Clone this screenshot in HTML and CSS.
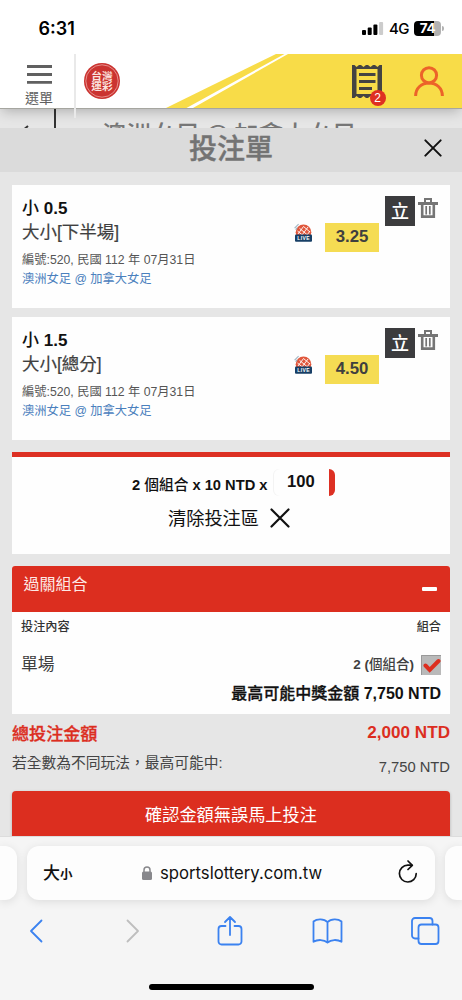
FILE: index.html
```html
<!DOCTYPE html>
<html lang="zh-Hant">
<head>
<meta charset="utf-8">
<title>投注單</title>
<link rel="stylesheet" href="styles.css">
</head>
<body>
<svg class="defs" width="0" height="0" aria-hidden="true">
  <defs>
    <symbol id="live" viewBox="0 0 18 20">
      <circle cx="9.5" cy="9.3" r="7.8" fill="#e0573c"/>
      <path d="M3.500 8 9 12.500M5.500 5.300 13.500 12M9.500 3.500 16 9M4 11l5.500-7.500M8 12l6-8M13 12l3-4" stroke="#fff" stroke-width=".9" fill="none"/>
      <path d="M.6 5.2 4.600 1.200M1.600 6.600l1.600-1.800" stroke="#9fb6c4" stroke-width="1.100" fill="none"/>
      <rect x="1" y="11.600" width="17" height="7.200" rx="1" fill="#173f66"/>
      <text x="9.700" y="17" text-anchor="middle" class="live-text">LIVE</text>
    </symbol>
    <symbol id="trash" viewBox="0 0 20 20">
      <path d="M0 4h20v3H0zM6 0h8v4h-2V2H8v2H6z" fill="#757575"/>
      <path d="M4.200 6v12.600h11.600V6" fill="none" stroke="#757575" stroke-width="2.600"/>
      <path d="M8.200 8v8.500M11.800 8v8.500" stroke="#757575" stroke-width="1.700"/>
    </symbol>
    <symbol id="cross" viewBox="0 0 20 20">
      <path d="M1.500 1.500l17 17M18.500 1.500l-17 17" fill="none" stroke="#111" stroke-width="2.200" stroke-linecap="round"/>
    </symbol>
  </defs>
</svg>
<div class="screen">
  <div class="status">
    <span class="clock">6:31</span>
    <svg class="signal" width="22" height="14" viewBox="0 0 22 14"><rect x="0" y="9" width="4" height="5" rx="1"/><rect x="5.700" y="6.500" width="4" height="7.500" rx="1"/><rect x="11.400" y="3.500" width="4" height="10.500" rx="1"/><rect x="17.100" y="1" width="4" height="13" rx="1" fill="#ccc"/></svg>
    <span class="net">4G</span>
    <span class="battery"><span class="level">74</span></span><i class="nub"></i>
  </div>

  <header class="site">
    <div class="menu">
      <svg width="25" height="19" viewBox="0 0 25 19"><path d="M0 1.500h25M0 9.500h25M0 17.300h25" stroke="#606060" stroke-width="2.800"/></svg>
      <span>選單</span>
    </div>
    <i class="divider"></i>
    <svg class="logo" width="38" height="38" viewBox="0 0 38 38">
      <circle cx="19" cy="19" r="18" fill="#cb3330"/>
      <circle cx="19" cy="19" r="16.200" fill="none" stroke="#f0b5b0" stroke-width=".7"/>
      <text x="8.300" y="18" textLength="21.500" lengthAdjust="spacingAndGlyphs" class="logo-text">台灣</text>
      <text x="8.300" y="28.200" textLength="21.500" lengthAdjust="spacingAndGlyphs" class="logo-text">運彩</text>
    </svg>
    <svg class="road" width="296" height="54" viewBox="0 0 296 54">
      <path d="M0 54 110 0H296V54z" fill="#f8dc48"/>
      <path d="M20.500 54 118.500 0h3.500L27 54z" fill="#fff"/>
    </svg>
    <div class="slip">
      <svg width="30" height="34" viewBox="0 0 30 34">
        <path d="M0 0h2.500l2 2 2.500-2h2l2.500 2L14 0h2l2.500 2L21 0h2l2.500 2 2-2H30v33h-2.500l-2-2-2.500 2h-2l-2.500-2-2.500 2h-2l-2.500-2L9 33H7l-2.500-2-2 2H0z" fill="#444342"/>
        <path d="M4.500 4h21v25h-21z" fill="#f8dc48"/>
        <path d="M7 9.500h16.500M7 16.500h16.500M7 23.500h13" stroke="#444342" stroke-width="3"/>
      </svg>
      <b class="count">2</b>
    </div>
    <svg class="user" width="30" height="30" viewBox="0 0 30 30" fill="none" stroke="#ec6329" stroke-width="3"><circle cx="15" cy="9.300" r="7.600"/><path d="M1.600 30c0-8 6-13 13.400-13s13.400 5 13.400 13"/></svg>
  </header>

  <div class="behind"><span class="crumb"><svg width="10" height="10" viewBox="0 0 10 10"><path d="M8 1 2 6l6 4" fill="none" stroke="#333" stroke-width="2"/></svg></span><span class="match">澳洲女足 @ 加拿大女足</span></div>

  <div class="title"><h1>投注單</h1><svg width="18" height="18"><use href="#cross"/></svg></div>

  <main>
    <section class="bet">
      <div class="info">
        <div class="pick"><span class="zh">小</span> 0.5</div>
        <div class="kind">大小[下半場]</div>
        <div class="code">編號:520, 民國 112 年 07月31日</div>
        <div class="teams">澳洲女足 @ 加拿大女足</div>
      </div>
      <svg class="live" width="18" height="20"><use href="#live"/></svg>
      <span class="odds">3.25</span>
      <span class="stand">立</span>
      <svg class="trash" width="20" height="20"><use href="#trash"/></svg>
    </section>

    <section class="bet">
      <div class="info">
        <div class="pick"><span class="zh">小</span> 1.5</div>
        <div class="kind">大小[總分]</div>
        <div class="code">編號:520, 民國 112 年 07月31日</div>
        <div class="teams">澳洲女足 @ 加拿大女足</div>
      </div>
      <svg class="live" width="18" height="20"><use href="#live"/></svg>
      <span class="odds">4.50</span>
      <span class="stand">立</span>
      <svg class="trash" width="20" height="20"><use href="#trash"/></svg>
    </section>

    <section class="stake">
      <div class="formula"><span>2 <span class="zh">個組合</span> x 10 NTD x</span><span class="amount">100</span></div>
      <div class="clear"><span>清除投注區</span><svg width="20" height="20"><use href="#cross"/></svg></div>
    </section>

    <section class="combo">
      <div class="combo-head"><span>過關組合</span><i></i></div>
      <div class="cols"><span>投注內容</span><span>組合</span></div>
      <div class="single">
        <span class="name">單場</span>
        <span class="num">2 (<span class="zh">個組合</span>)</span>
        <svg width="20" height="20" viewBox="0 0 20 20"><rect width="20" height="20" fill="#b9b9b9"/><path d="M.5 20V.5H20" fill="none" stroke="#999"/><path d="M4.500 10.500 8.700 14.800 17.500 6" fill="none" stroke="#dd2e1f" stroke-width="4" stroke-linecap="round"/></svg>
      </div>
      <div class="prize"><span class="zh">最高可能中獎金額</span> 7,750 NTD</div>
    </section>

    <div class="total"><span class="zh">總投注金額</span><b>2,000 NTD</b></div>
    <div class="possible"><span>若全數為不同玩法，最高可能中:</span><span class="sum">7,750 NTD</span></div>
    <div class="confirm">確認金額無誤馬上投注</div>
  </main>

  <footer>
    <div class="tabs">
      <i class="side left"></i>
      <div class="address">
        <span class="size">大<small>小</small></span>
        <svg class="lock" width="10" height="14" viewBox="0 0 10 14"><rect x="0" y="5.500" width="10" height="8.500" rx="1.500" fill="#88888c"/><path d="M2 6V4a3 3 0 0 1 6 0v2" fill="none" stroke="#88888c" stroke-width="1.500"/></svg>
        <span class="url">sportslottery.com.tw</span>
        <svg class="reload" width="20" height="23" viewBox="0 0 20 23" fill="none" stroke="#111" stroke-width="1.700" stroke-linecap="round" stroke-linejoin="round"><path d="M18.200 13.700A8.400 8.400 0 1 1 9.800 5.200h4"/><path d="M10 1l4.300 4.300L10 9.500"/></svg>
      </div>
      <i class="side right"></i>
    </div>
    <nav>
      <svg width="16" height="26" viewBox="0 0 16 26"><path d="M13.500 2.500 3 13l10.500 10.500" class="line"/></svg>
      <svg width="16" height="26" viewBox="0 0 16 26"><path d="M2.500 2.500 13 13 2.500 23.500" class="line off"/></svg>
      <svg width="26" height="32" viewBox="0 0 26 32"><path d="M8.500 11H4.500A3 3 0 0 0 1.500 14v12.500a3 3 0 0 0 3 3h17a3 3 0 0 0 3-3V14a3 3 0 0 0-3-3h-4M13 20V2.500M8 7l5-5 5 5" class="line"/></svg>
      <svg width="31" height="26" viewBox="0 0 31 26"><path d="M15.500 4.200C12 .5 5 .5 1.500 3.500v20.300c4-2.500 10.500-2.500 14 .8 3.500-3.300 10-3.300 14-.8V3.500C26 .5 19 .5 15.500 4.200zM15.500 4.200v20" class="line"/></svg>
      <svg width="30" height="30" viewBox="0 0 30 30"><path d="M8.500 22.500H5a3 3 0 0 1-3-3V5a3 3 0 0 1 3-3h14.500a3 3 0 0 1 3 3v3.500" class="line"/><rect x="8.500" y="8.500" width="20" height="19.500" rx="3" class="line"/></svg>
    </nav>
    <i class="home"></i>
  </footer>
</div>
</body>
</html>
```
FILE: styles.css
```css
* { box-sizing: border-box; }
html, body { margin: 0; padding: 0; }
body { font-family: "Liberation Sans", "Noto Sans CJK TC", sans-serif; color: #3f3f3f; background: #e6e6e6; }
svg { display: block; flex: none; }
i { display: block; flex: none; }
.defs { position: absolute; }
.screen { width: 462px; height: 1000px; overflow: hidden; display: flex; flex-direction: column; background: #e6e6e6; }
.zh { font-family: "Noto Sans CJK TC", sans-serif; font-weight: 500; line-height: 1; }

.status { height: 54px; flex: none; background: #fff; display: flex; align-items: flex-start; padding: 0 18px 0 38.500px; color: #000; font-family: Inter, sans-serif; }
.clock { width: 323.500px; font-size: 18px; font-weight: 600; line-height: 22px; padding-top: 18px; letter-spacing: 0; }
.signal { margin-top: 21px; }
.net { width: 30px; padding-left: 5px; margin-top: 20px; font-size: 15px; font-weight: 500; line-height: 18px; letter-spacing: -.6px; }
.battery { width: 27px; height: 15px; margin-top: 21px; border-radius: 4px; background: linear-gradient(90deg, #000 74%, #b2b2b2 74%); }
.level { display: block; text-align: center; color: #fff; font-size: 13.500px; font-weight: 700; line-height: 15px; letter-spacing: -.4px; }
.nub { width: 1.500px; height: 5px; margin: 26px 0 0 1px; background: #b2b2b2; border-radius: 0 2px 2px 0; }

.site { height: 55px; flex: none; display: grid; grid-template-columns: 74px 2px 1fr; background: #fff; border-bottom: 1.500px solid #a6a6a0; box-shadow: 0 4px 12px -2px rgba(0,0,0,.25); clip-path: inset(0 0 -20px 0); position: relative; z-index: 2; }
.menu { padding: 11px 0 0 25px; color: #606060; font-size: 14px; line-height: 20px; }
.menu svg { margin: 0 0 4px 2px; }
.menu span { display: block; }
.divider { height: 64px; background: #e9e9e9; z-index: 2; }
.logo { margin: 8px 0 0 7px; }
.logo-text { font: 700 9.800px "Noto Sans CJK TC", sans-serif; fill: #fbe3df; }
.road { position: absolute; right: 0; top: 0; }
.slip { position: absolute; left: 352px; top: 11px; }
.count { position: absolute; left: 17.500px; top: 25px; width: 16px; height: 16px; border-radius: 50%; background: #df3022; color: #fff; font-size: 12px; font-weight: 400; line-height: 16px; text-align: center; }
.user { position: absolute; left: 414px; top: 12px; }

.behind { height: 19px; flex: none; overflow: hidden; display: flex; }
.crumb { width: 56px; height: 19px; border-right: 2px solid #333; padding: 16px 0 0 20px; }
.match { padding-left: 46px; font-size: 24.400px; line-height: 24px; padding-top: 12px; color: #777; font-weight: 500; white-space: nowrap; font-family: "Noto Sans CJK TC", sans-serif; }

.title { height: 44px; flex: none; background: #dbdbdb; display: grid; grid-template-columns: 1fr 18px; padding: 0 20px 0 0; position: relative; z-index: 3; }
.title h1 { margin: 0; padding-left: 38px; font: 500 28px/38px "Noto Sans CJK TC", sans-serif; color: #737373; text-align: center; -webkit-text-stroke: .4px #737373; }
.title svg { margin-top: 11px; }

main { flex: 1; min-height: 0; padding: 13px 12px 0; overflow: hidden; }
section { background: #fefefe; }
.bet { height: 123px; margin-bottom: 9px; display: flex; align-items: flex-start; padding-left: 10px; }
.info { width: 272px; padding-top: 13px; white-space: nowrap; }
.pick { font-size: 17px; font-weight: 700; line-height: 22px; height: 22px; color: #111; }
.kind { font-size: 17.500px; line-height: 24px; height: 24px; font-family: "Liberation Sans", "Noto Sans CJK TC", sans-serif; -webkit-text-stroke: .2px #3f3f3f; }
.code { font-size: 12.250px; line-height: 18px; margin-top: 7px; color: #555; }
.teams { font-size: 12.250px; line-height: 18px; margin-top: 1px; color: #4a80bd; }
.live { margin: 38px 0 0 0; }
.live-text { font: 700 5px "Liberation Sans", sans-serif; fill: #fff; letter-spacing: .4px; }
.odds { width: 54px; height: 29px; margin: 38px 0 0 13px; background: #f5dc53; font-size: 16.800px; font-weight: 700; line-height: 27px; text-align: center; }
.stand { width: 30px; height: 30px; margin: 11px 0 0 6px; background: #3c3c3e; color: #fff; font: 500 18px/28px "Noto Sans CJK TC", sans-serif; text-align: center; }
.trash { margin: 13px 0 0 3px; }

.stake { height: 102px; margin-bottom: 12px; border-top: 5px solid #dd3023; color: #111; }
.bet + .stake { margin-top: 12px; }
.formula { display: flex; font-size: 14.700px; font-weight: 700; line-height: 20px; padding: 12px 0 0 120px; height: 40px; white-space: nowrap; }
.formula > span:first-child { padding-top: 6px; width: 141px; }
.amount { width: 62px; height: 27px; border-right: 6px solid #dd3023; border-radius: 6px; padding-left: 14px; font-size: 16.600px; line-height: 26px; box-shadow: inset 1px 0 0 #f3f3f3; }
.clear { display: flex; align-items: center; gap: 11px; height: 27px; margin-top: 8px; padding-left: 156px; font-size: 18.200px; line-height: 26px; }
.clear svg { margin-top: -1px; }

.combo { height: 148px; border-radius: 3px 3px 0 0; overflow: hidden; }
.combo-head { height: 46px; background: #dc2e1f; color: #fde9e6; font-size: 16px; line-height: 37px; padding: 0 13px 0 11.500px; display: flex; justify-content: space-between; }
.combo-head i { width: 15px; height: 4px; margin-top: 21px; background: #fff; border-radius: 1px; }
.cols { display: flex; justify-content: space-between; padding: 0 9px; font: 500 12.200px/28px "Noto Sans CJK TC", sans-serif; height: 43px; color: #333; }
.single { display: flex; padding: 0 9px 0 9px; height: 26px; line-height: 20px; }
.name { flex: 1; font-size: 16.800px; }
.num { font-size: 13.500px; font-weight: 700; margin-right: 7px; }
.prize { text-align: right; padding-right: 9px; font-size: 16px; font-weight: 700; line-height: 26px; color: #111; }
.prize .zh, .total .zh { -webkit-text-stroke: .3px currentColor; }

.total { display: flex; justify-content: space-between; font-size: 17.100px; font-weight: 700; line-height: 26px; height: 34px; padding-top: 6px; color: #dc2e1f; }
.total .zh { line-height: 25px; }
.possible { display: flex; justify-content: space-between; font-size: 14.750px; line-height: 30px; height: 43px; color: #444; }
.sum { padding-top: 4px; }
.confirm { height: 50px; border-radius: 4px; background: #dc2e1f; color: #fff; font-size: 17.200px; line-height: 49px; text-align: center; box-shadow: 0 1px 3px rgba(0,0,0,.25); }

footer { height: 164px; flex: none; background: #f5f5f5; border-top: 1px solid #ddd; position: relative; z-index: 3; }
.tabs { display: grid; grid-template-columns: 17px 408px 17px; gap: 10px; padding-top: 9px; }
.side, .address { height: 54px; background: #fdfdfd; box-shadow: 0 2px 10px rgba(0,0,0,.1); }
.side.left { border-radius: 0 12px 12px 0; }
.side.right { border-radius: 12px 0 0 12px; }
.address { border-radius: 12px; display: flex; align-items: center; color: #111; padding: 0 16px; }
.size { width: 99px; font: 500 17px/24px "Noto Sans CJK TC", sans-serif; }
.size small { font-size: 12.500px; font-weight: 700; }
.url { width: 237px; padding-left: 8px; font: 400 16.700px/24px Inter, sans-serif; white-space: nowrap; }
.reload { margin-top: -3px; margin-left: 9px; }
nav { height: 62px; display: grid; grid-template-columns: repeat(5, 97.200px); align-items: center; justify-items: center; margin-left: -12.500px; }
.line { fill: none; stroke: #3b82f0; stroke-width: 1.800; stroke-linecap: round; stroke-linejoin: round; }
.off { stroke: #bebebe; }
.home { width: 165px; height: 6px; border-radius: 3px; margin: 22px 0 0 149px; background: #000; }
```
